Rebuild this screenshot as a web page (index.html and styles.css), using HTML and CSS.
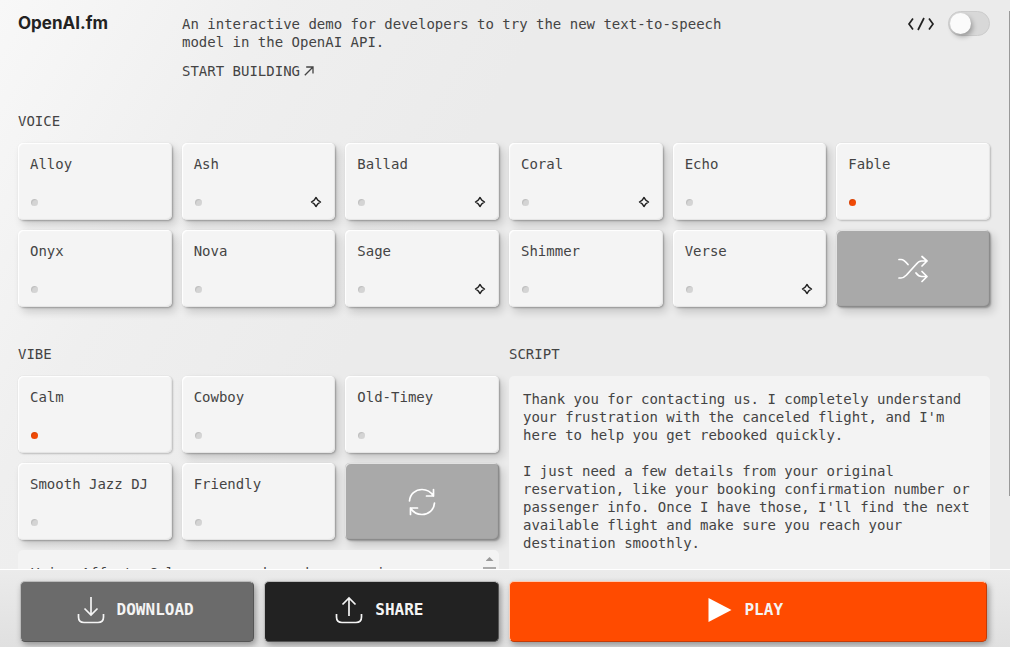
FILE: index.html
```html
<!DOCTYPE html>
<html lang="en">
<head>
    <meta charset="UTF-8">
    <meta name="viewport" content="width=device-width, initial-scale=1.0">
    <title>OpenAI.fm</title>
    <link rel="stylesheet" href="styles.css">
</head>
<body>
<svg class="sprite" aria-hidden="true">
    <symbol id="star" viewBox="0 0 12 12">
        <path d="M6 1.5 L7.8 4.2 L10.5 6 L7.8 7.8 L6 10.5 L4.2 7.8 L1.5 6 L4.2 4.2 Z" fill="none" stroke="currentColor" stroke-width="1.4" stroke-linejoin="round"/>
    </symbol>
</svg>

<div class="app">
    <main class="content">
        <header class="header">
            <h1 class="logo">OpenAI.fm</h1>
            <div class="intro">
                <p>An interactive demo for developers to try the new text-to-speech model in the OpenAI API.</p>
                <a class="start-link" href="#">START BUILDING
                    <svg width="10" height="10" viewBox="0 0 10 10" fill="none" stroke="currentColor" stroke-width="1.3"><path d="M0.8 9.2 L9 1 M2.2 1 H9 V7.6"/></svg>
                </a>
            </div>
            <label class="code-toggle">
                <svg width="28" height="14" viewBox="0 0 28 14" fill="none" stroke="currentColor" stroke-width="1.7" role="img" aria-label="Show code"><path d="M6 1.5 L2 7 L6 12.5 M17 1 L11 13 M22 1.5 L26 7 L22 12.5"/></svg>
                <input type="checkbox" class="switch">
            </label>
        </header>

        <section class="block">
            <h2 class="title">VOICE</h2>
            <div class="cards voices">
                <button class="card" type="button">Alloy<span class="card-foot"><i class="dot"></i></span></button>
                <button class="card" type="button">Ash<span class="card-foot"><i class="dot"></i><svg class="star"><use href="#star"/></svg></span></button>
                <button class="card" type="button">Ballad<span class="card-foot"><i class="dot"></i><svg class="star"><use href="#star"/></svg></span></button>
                <button class="card" type="button">Coral<span class="card-foot"><i class="dot"></i><svg class="star"><use href="#star"/></svg></span></button>
                <button class="card" type="button">Echo<span class="card-foot"><i class="dot"></i></span></button>
                <button class="card selected" type="button" aria-pressed="true">Fable<span class="card-foot"><i class="dot"></i></span></button>
                <button class="card" type="button">Onyx<span class="card-foot"><i class="dot"></i></span></button>
                <button class="card" type="button">Nova<span class="card-foot"><i class="dot"></i></span></button>
                <button class="card" type="button">Sage<span class="card-foot"><i class="dot"></i><svg class="star"><use href="#star"/></svg></span></button>
                <button class="card" type="button">Shimmer<span class="card-foot"><i class="dot"></i></span></button>
                <button class="card" type="button">Verse<span class="card-foot"><i class="dot"></i><svg class="star"><use href="#star"/></svg></span></button>
                <button class="card card-action" type="button" aria-label="Random voice">
                    <svg width="30" height="28" viewBox="0 0 30 28" fill="none" stroke="currentColor" stroke-width="1.7" stroke-linecap="round" stroke-linejoin="round"><path d="M1 4.5 H3 C6 4.5 8 7 10 9.5 M1 23 H3 C5.5 23 7 21.5 8.500 20 L18 9.500 C19.500 7.500 21 6 23.500 6 H29 M24 1.500 L29 6 L24 11 M18 18 C19.500 20 21 21.500 23.500 21.500 H29 M24 16.500 L29 21.500 L24 26.500"/></svg>
                </button>
            </div>
        </section>

        <div class="columns">
            <section class="block">
                <h2 class="title">VIBE</h2>
                <div class="cards vibes">
                    <button class="card selected" type="button" aria-pressed="true">Calm<span class="card-foot"><i class="dot"></i></span></button>
                    <button class="card" type="button">Cowboy<span class="card-foot"><i class="dot"></i></span></button>
                    <button class="card" type="button">Old-Timey<span class="card-foot"><i class="dot"></i></span></button>
                    <button class="card" type="button">Smooth Jazz DJ<span class="card-foot"><i class="dot"></i></span></button>
                    <button class="card" type="button">Friendly<span class="card-foot"><i class="dot"></i></span></button>
                    <button class="card card-action" type="button" aria-label="More vibes">
                        <svg width="28" height="28" viewBox="0 0 28 28" fill="none" stroke="currentColor" stroke-width="1.7" stroke-linecap="round" stroke-linejoin="round"><path d="M1.5 13 C2 6 7.5 1.5 14 1.5 C19 1.5 23 4 25.5 8 M25.5 1.5 V8 H18.5 M26.5 15 C26 22 20.5 26.5 14 26.5 C9 26.5 5 24 2.5 20 M2.5 26.5 V20 H9.5"/></svg>
                    </button>
                </div>
                <div class="vibe-box">
                    <textarea class="editor vibe-editor" aria-label="Vibe instructions">Voice Affect: Calm, composed, and reassuring; project quiet authority and confidence.

Tone: Sincere, empathetic, and gently authoritative.</textarea>
                    <span class="scroll-mark"></span>
                </div>
            </section>
            <section class="block">
                <h2 class="title"><label for="script">SCRIPT</label></h2>
                <textarea id="script" class="editor script-editor">Thank you for contacting us. I completely understand your frustration with the canceled flight, and I'm here to help you get rebooked quickly.

I just need a few details from your original reservation, like your booking confirmation number or passenger info. Once I have those, I'll find the next available flight and make sure you reach your destination smoothly.</textarea>
            </section>
        </div>
    </main>

    <footer class="footer">
        <div class="footer-half">
            <button class="btn btn-download" type="button">
                <svg width="28" height="28" viewBox="0 0 28 28" fill="none" stroke="currentColor" stroke-width="1.7"><path d="M14 1 V19 M7.5 12.5 L14 19 L20.5 12.5 M1.5 18 V21 Q1.5 26.5 7 26.5 H21 Q26.5 26.5 26.5 21 V18"/></svg>
                DOWNLOAD
            </button>
            <button class="btn btn-share" type="button">
                <svg width="28" height="28" viewBox="0 0 28 28" fill="none" stroke="currentColor" stroke-width="1.7"><path d="M14 20 V2 M7.5 8.5 L14 2 L20.5 8.5 M1.5 18 V21 Q1.5 26.5 7 26.5 H21 Q26.5 26.5 26.5 21 V18"/></svg>
                SHARE
            </button>
        </div>
        <div class="footer-half">
            <button class="btn btn-play" type="button">
                <svg width="24" height="24" viewBox="0 0 24 24" fill="#fff"><path d="M0.5 0 L23.5 12 L0.5 24 Z"/></svg>
                PLAY
            </button>
        </div>
    </footer>
    <div class="page-scroll"></div>
</div>
</body>
</html>
```

FILE: styles.css
```css
* { box-sizing: border-box; }

body {
    margin: 0;
    background: #ebebeb linear-gradient(120deg, #f8f8f8 0, #efefef 240px, #ebebeb 480px);
    color: #444;
    font: 14px/18px "DejaVu Sans Mono", "Liberation Mono", monospace;
}

button, textarea { font: inherit; color: inherit; }
h1, h2, p { margin: 0; }
.sprite { position: absolute; width: 0; height: 0; }

.app { position: relative; display: flex; flex-direction: column; height: 100vh; }
.content { flex: 1; min-height: 0; overflow: hidden; padding: 15px 20px 0 18px; }

/* Header */
.header { display: grid; grid-template-columns: 154px 1fr auto; column-gap: 10px; margin-bottom: 32px; }
.logo { font: 700 17px/17px Inter, "Liberation Sans", sans-serif; color: #222; }
.intro { max-width: 560px; }
.start-link { display: inline-flex; align-items: center; gap: 4px; margin-top: 11px; color: inherit; text-decoration: none; }
.code-toggle { display: flex; gap: 13px; align-items: center; height: 17px; color: #222; }
.switch {
    appearance: none;
    width: 42px;
    height: 25px;
    margin: 0;
    padding: 1px;
    border: 1px solid #ccc;
    border-radius: 13px;
    background: #d8d8d8;
}
.switch::before {
    content: "";
    display: block;
    width: 21px;
    height: 21px;
    border-radius: 50%;
    background: #fbfbfb;
    box-shadow: 2px 3px 5px rgba(0, 0, 0, 0.28);
}

/* Card grids */
.title { margin-bottom: 13px; font-size: 14px; font-weight: 400; }
.cards { display: grid; gap: 10px; }
.voices { grid-template-columns: repeat(6, 1fr); }
.vibes { grid-template-columns: repeat(3, 1fr); margin-bottom: 10px; }
.card {
    display: flex;
    flex-direction: column;
    justify-content: space-between;
    height: 77px;
    padding: 12px 13px 13px 12px;
    border: 0;
    border-radius: 5px;
    background: #f4f4f4;
    text-align: left;
    box-shadow: inset 1px 1px 1px #fff, inset -1px -1px 1px #e4e4e4, 1px 1px 2px rgba(0, 0, 0, 0.28), 4px 5px 8px rgba(0, 0, 0, 0.16);
}
.card.selected { box-shadow: inset 1px 1px 1px #fff, inset -1px -1px 1px #e4e4e4, 0 0 1px rgba(0, 0, 0, 0.2), 1px 1px 2px rgba(0, 0, 0, 0.2); }
.card-foot { display: flex; align-items: center; justify-content: space-between; width: 100%; height: 10px; padding-left: 1px; }
.dot { width: 7px; height: 7px; border-radius: 50%; background: #d4d4d4; box-shadow: inset 1px 1px 1px rgba(0, 0, 0, 0.1); }
.selected .dot { background: #f04a06; }
.star { width: 12px; height: 12px; color: #222; }
.card-action {
    align-items: center;
    justify-content: center;
    padding: 0;
    background: #a9a9a9;
    color: #fff;
    box-shadow: inset 1px 1px 0 #e2e2e2, inset -1px -1px 1px #888, 1px 1px 2px rgba(0, 0, 0, 0.3), 4px 5px 8px rgba(0, 0, 0, 0.16);
}

/* Vibe and script */
.columns { display: grid; grid-template-columns: 1fr 1fr; gap: 10px; margin-top: 38px; }
.editor {
    display: block;
    width: 100%;
    padding: 14px;
    border: 0;
    border-radius: 5px;
    background: #f3f3f3;
    resize: none;
    overflow: hidden;
}
.vibe-box { position: relative; }
.vibe-editor { height: 180px; padding-right: 36px; padding-left: 13px; }
.script-editor { height: 354px; }
.scroll-mark {
    position: absolute;
    top: 7px;
    right: 3px;
    width: 13px;
    height: 60px;
    background: linear-gradient(#aaa, #aaa) 0 10px / 13px 60px no-repeat;
}
.scroll-mark::before {
    content: "";
    display: block;
    width: 8px;
    height: 4px;
    margin: 0 auto;
    background: #999;
    clip-path: polygon(50% 0, 100% 100%, 0 100%);
}

/* Bottom bar */
.footer {
    display: grid;
    grid-template-columns: 1fr 1fr;
    gap: 10px;
    padding: 11px 23px 5px 20px;
    border-top: 1px solid #fff;
    background: linear-gradient(#ebebeb, #e0e0e0);
}
.footer-half { display: flex; gap: 10px; }
.btn {
    flex: 1;
    display: flex;
    align-items: center;
    justify-content: center;
    gap: 12px;
    height: 61px;
    padding: 0 4px 3px 0;
    border: 1px solid #bbb;
    border-right-color: #555;
    border-bottom-color: #555;
    border-radius: 5px;
    color: #f4f4f4;
    font-size: 16px;
    font-weight: 700;
    box-shadow: 2px 3px 6px rgba(0, 0, 0, 0.35);
}
.btn-download { background: #6b6b6b; }
.btn-share { background: #222; }
.btn-play { background: #ff4b00; border-color: #ffc9b0 #c23c08 #c23c08 #ffc9b0; }

/* Thin page scrollbar */
.page-scroll { position: absolute; top: 11px; right: 0; width: 1px; height: 75%; background: #999; }
```
